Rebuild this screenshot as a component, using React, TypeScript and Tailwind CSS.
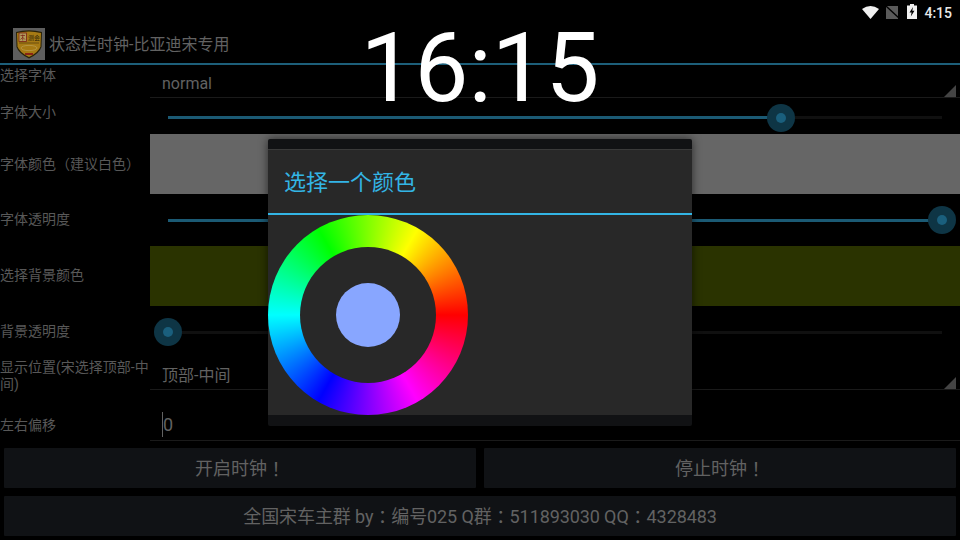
const font = { fontFamily: '"Roboto","Noto Sans CJK SC",sans-serif' };
const tc = { fontFamily: '"Noto Sans CJK TC",sans-serif' };

function P({ c }: { c: string }) {
  return <span style={tc}>{c}</span>;
}

function Paren({ c }: { c: string }) {
  return <span className="inline-block w-[14px] text-center">{c}</span>;
}

function Slider({ pct }: { pct: number }) {
  return (
    <div className="relative h-[3px] mx-[18px] bg-[#101010]">
      <div className="h-[3px] bg-[#1b5a74]" style={{ width: `${pct}%` }} />
      <div
        className="absolute top-1/2 w-[28px] h-[28px] -translate-x-1/2 -translate-y-1/2 rounded-full bg-[#0e3545] flex items-center justify-center"
        style={{ left: `${pct}%` }}
      >
        <div className="w-[10px] h-[10px] rounded-full bg-[#1a5f7d]" />
      </div>
    </div>
  );
}

function Corner() {
  return (
    <svg className="absolute right-[4px] bottom-0" width="12" height="12" viewBox="0 0 12 12">
      <path d="M12 0V12H0Z" fill="#444444" />
    </svg>
  );
}

function Row({ label, h, children, labelClass = "" }: { label: any; h: string; children: any; labelClass?: string }) {
  return (
    <div className={`flex ${h}`}>
      <div className={`w-[150px] shrink-0 text-[14px] text-[#585858] ${labelClass}`}>{label}</div>
      <div className="flex-1 relative flex flex-col justify-center">{children}</div>
    </div>
  );
}

function Logo() {
  return (
    <svg width="32" height="32" viewBox="0 0 32 32" className="shrink-0">
      <rect width="32" height="32" fill="#5e5e5e" />
      <path d="M3 4Q16 0.5 29 4L28.5 19Q26.5 25.5 16 30.5Q5.5 25.5 3.5 19Z" fill="#2a2208" />
      <path d="M4 5Q16 2 28 5L27.5 18.5Q25.5 24.5 16 29Q6.5 24.5 4.5 18.5Z" fill="#a67a14" />
      <rect x="6" y="5" width="7.5" height="8.5" fill="#b09a5c" stroke="#7a2014" strokeWidth="0.8" />
      <path d="M7.5 7.5h4.5M9.7 6.5v6M7.5 11.5l2.2-2.2 2.2 2.2" stroke="#7a2014" strokeWidth="0.7" fill="none" />
      <text x="15" y="11.5" fontSize="6" fill="#2a2208" style={{ fontFamily: '"Noto Sans CJK SC",sans-serif' }}>测会</text>
      <rect x="6" y="14.5" width="20" height="1" fill="#6a4e0e" />
      <ellipse cx="16" cy="20" rx="8" ry="2.6" fill="none" stroke="#b89a4c" strokeWidth="0.8" />
      <rect x="12" y="25" width="8" height="2" fill="#8a2414" />
    </svg>
  );
}

function Btn({ children, className = "" }: { children: any; className?: string }) {
  return (
    <div className={`h-[40px] bg-[#101215] rounded-[1px] flex items-center justify-center pt-[1px] text-[18px] text-[#626262] whitespace-pre ${className}`}>
      {children}
    </div>
  );
}

export default function App() {
  return (
    <div className="relative w-[960px] h-[540px] bg-black overflow-hidden" style={font}>
      {/* status bar */}
      <div className="h-[25px] pr-[8px] flex items-center justify-end">
        <svg width="17" height="13" viewBox="0 0 17 13" className="mr-[7px]">
          <path d="M0 3Q8.5-3 17 3L8.5 13Z" fill="#f0f0f0" />
        </svg>
        <svg width="14" height="13" viewBox="0 0 14 13" className="mr-[7px]">
          <path d="M0 0H12V13H0Z" fill="#5a5a5a" />
          <path d="M0 0L14 13" stroke="#000" strokeWidth="1.3" />
        </svg>
        <svg width="10" height="15" viewBox="0 0 10 15" className="mr-[7px] -mt-[2px]">
          <path d="M3 0H7V1.5H10V15H0V1.5H3Z" fill="#f0f0f0" />
          <path d="M6 3L2.5 8.5H4.6L3.8 12.5L7.5 6.8H5.3Z" fill="#000" />
        </svg>
        <span className="text-[14px] font-medium text-[#e8e8e8] leading-none">4:15</span>
      </div>

      <div className="h-[38px] flex items-center pl-[13px] gap-[4px]">
        <Logo />
        <span className="text-[16px] text-[#626262] whitespace-nowrap pt-[1px]">状态栏时钟-比亚迪宋专用</span>
      </div>
      <div className="h-[2px] bg-[#1d5f7a]" />

      <Row label="选择字体" h="h-[33px]" labelClass="leading-[14px] pt-[3px]">
        <div className="relative h-[33px] border-b border-[#1a1a1a] pl-[12px] pt-[10px] text-[16px] leading-[18px] text-[#626262]">
          normal
          <Corner />
        </div>
      </Row>
      <Row label="字体大小" h="h-[36px]" labelClass="leading-[14px] pt-[7px]">
        <div className="pt-[3px]"><Slider pct={79.2} /></div>
      </Row>
      <Row label={<>字体颜色<Paren c="（" />建议白色<Paren c="）" /></>} h="h-[60px]" labelClass="leading-[14px] pt-[23px] whitespace-nowrap">
        <div className="h-[60px] bg-[#666666]" />
      </Row>
      <Row label="字体透明度" h="h-[52px]" labelClass="flex items-center pb-[2px]">
        <Slider pct={100} />
      </Row>
      <Row label="选择背景颜色" h="h-[60px]" labelClass="flex items-center pb-[2px]">
        <div className="h-[60px] bg-[#2a3300]" />
      </Row>
      <Row label="背景透明度" h="h-[52px]" labelClass="flex items-center pb-[2px]">
        <Slider pct={0} />
      </Row>
      <Row label="显示位置(宋选择顶部-中间)" h="h-[32px]" labelClass="leading-[17px] pt-[1px]">
        <div className="relative h-[32px] border-b border-[#1a1a1a] pl-[12px] pt-[9px] text-[16px] leading-[18px] text-[#626262]">
          顶部-中间
          <Corner />
        </div>
      </Row>
      <Row label="左右偏移" h="h-[51px]" labelClass="leading-[14px] pt-[28px]">
        <div className="h-[51px] pt-[22px]">
          <div className="relative h-[29px] pl-[13px] border-b border-[#1a1a1a] text-[18px] leading-[26px] text-[#626262]">
            <span className="absolute left-[12px] top-0 w-[1px] h-[25px] bg-[#626262]" />0
          </div>
        </div>
      </Row>
      <div className="flex gap-[8px] px-[4px] mt-[7px]">
        <Btn className="flex-1">开启时钟<P c="！" /></Btn>
        <Btn className="flex-1">停止时钟<P c="！" /></Btn>
      </div>
      <div className="px-[4px] mt-[8px]">
        <Btn className="tracking-[-0.1px]">全国宋车主群 by<P c="：" />编号025 Q群<P c="：" />511893030 QQ<P c="：" />4328483</Btn>
      </div>

      {/* floating clock */}
      <div className="absolute top-[12px] left-0 right-0 text-center text-white text-[96px] leading-[112px] font-normal" style={{ fontFamily: '"Roboto",sans-serif' }}>
        16:15
      </div>

      {/* dialog */}
      <div className="absolute left-[268px] top-[139px] w-[424px] h-[287px] flex flex-col rounded-[2px] overflow-hidden bg-[#111214] shadow-[0_0_10px_rgba(0,0,0,0.6)]">
        <div className="h-[10px] shrink-0" />
        <div className="h-[266px] bg-[#282828] border-t border-[#3a3a3a]">
          <div className="h-[63px] pl-[16px] flex items-center text-[22px] text-[#33b5e5] pt-[1px]">选择一个颜色</div>
          <div className="h-[2px] bg-[#33b5e5]" />
          <div className="w-[200px] h-[200px] rounded-full bg-[conic-gradient(from_90deg,#ff0000,#ff00ff,#0000ff,#00ffff,#00ff00,#ffff00,#ff0000)] flex items-center justify-center">
            <div className="w-[136px] h-[136px] rounded-full bg-[#282828] flex items-center justify-center">
              <div className="w-[64px] h-[64px] rounded-full bg-[#88a6ff]" />
            </div>
          </div>
        </div>
      </div>
    </div>
  );
}
